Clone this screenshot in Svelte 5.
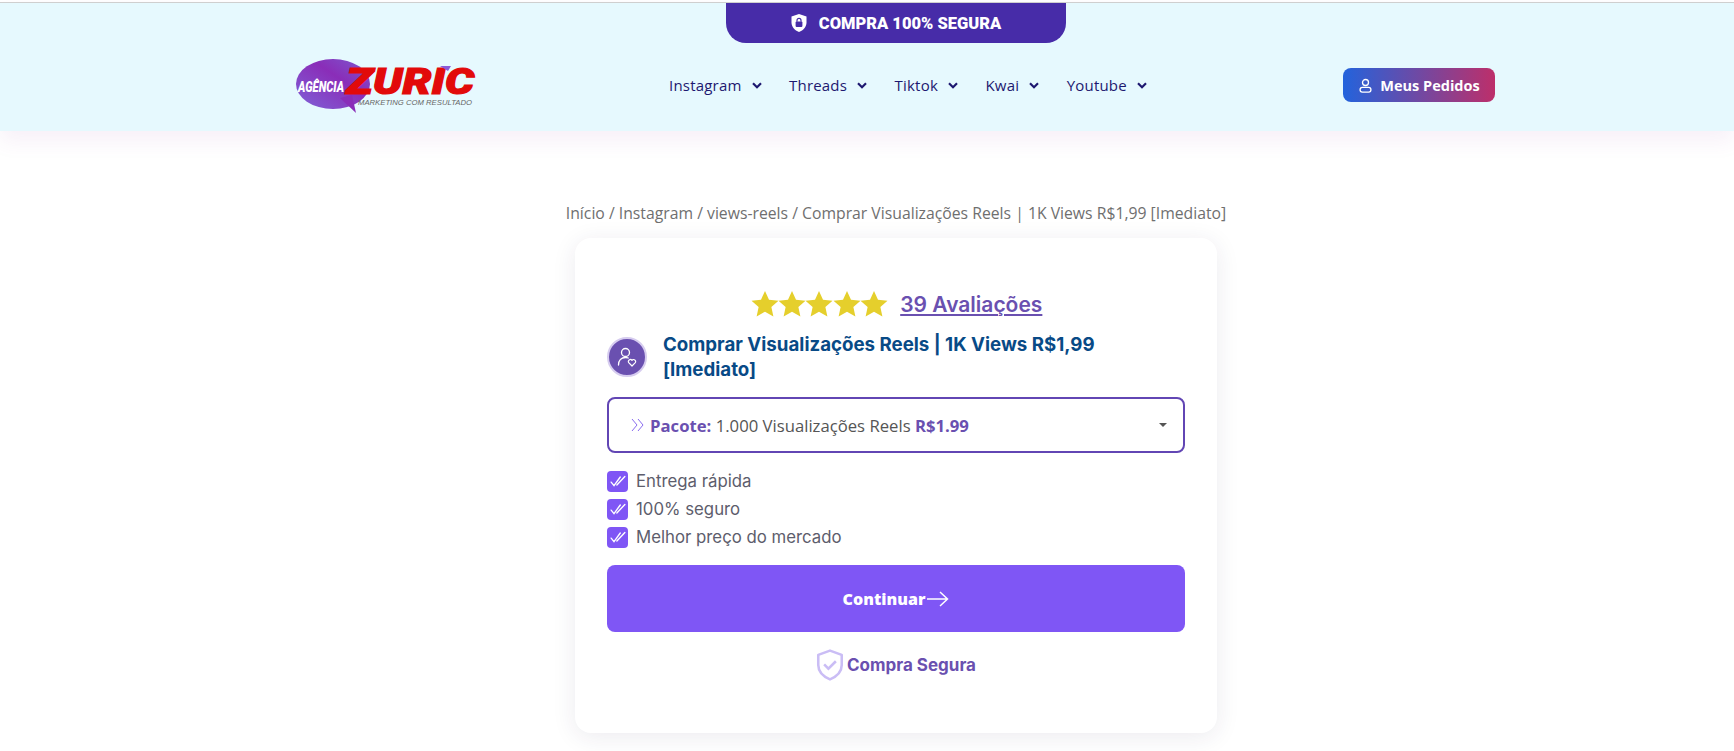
<script>
  const nav = ["Instagram", "Threads", "Tiktok", "Kwai", "Youtube"];
  const perks = ["Entrega rápida", "100% seguro", "Melhor preço do mercado"];
  const starPath = "M12 1.5l3.2 7 7.6.8-5.7 5.1 1.6 7.5L12 18.1l-6.7 3.8 1.6-7.5L1.2 9.3l7.6-.8z";
</script>

<div class="page">
  <header class="top">
    <div class="banner">
      <svg viewBox="0 0 16 18" width="16" height="18" aria-hidden="true">
        <path d="M8 0l7.5 2.6v6c0 4.4-3.2 7.8-7.5 9.4C3.700 16.400.5 13 .5 8.600v-6z" fill="#fff" />
        <rect x="4.600" y="7.500" width="6.800" height="5.600" rx="1" fill="#472ca8" />
        <path d="M6 7.800V6.400a2 2 0 0 1 4 0v1.400" fill="none" stroke="#472ca8" stroke-width="1.200" />
      </svg>
      <span>COMPRA 100% SEGURA</span>
    </div>

    <div class="bar">
      <svg class="logo" viewBox="0 0 182 56" width="182" height="56" role="img" aria-label="Agência Zuric">
        <defs>
          <linearGradient id="bubble" x1="0" x2="1" y1="1" y2="0">
            <stop offset="0" stop-color="#7f63d8" />
            <stop offset="0.6" stop-color="#8a2db8" />
            <stop offset="1" stop-color="#7b5ad0" />
          </linearGradient>
        </defs>
        <ellipse cx="37" cy="26" rx="37" ry="25" fill="url(#bubble)" />
        <path d="M44 40l16 15-4-18z" fill="#8a2db8" />
        <text class="l-agencia" x="2" y="34" textLength="46" lengthAdjust="spacingAndGlyphs">AGÊNCIA</text>
        <text class="l-zuric" x="50" y="36" textLength="128" lengthAdjust="spacingAndGlyphs">ZURIC</text>
        <path d="M144 8h11l-3 5z" fill="#8a5ad8" />
        <text class="l-sub" x="62" y="47" textLength="114" lengthAdjust="spacingAndGlyphs">MARKETING COM RESULTADO</text>
      </svg>

      <nav>
        {#each nav as item}
          <a href="#top" class="nav-item">
            <span>{item}</span>
            <svg viewBox="0 0 10 7" width="10" height="7" aria-hidden="true">
              <path d="M1 1.300L5 5.200l4-3.900" fill="none" stroke="#1d1870" stroke-width="2.200" />
            </svg>
          </a>
        {/each}
      </nav>

      <a href="#top" class="orders">
        <svg viewBox="0 0 16 16" width="15" height="15" aria-hidden="true">
          <circle cx="8" cy="4.800" r="3.200" fill="none" stroke="#fff" stroke-width="1.400" />
          <rect x="2.200" y="10" width="11.600" height="5" rx="2.400" fill="none" stroke="#fff" stroke-width="1.400" />
        </svg>
        <span>Meus Pedidos</span>
      </a>
    </div>
  </header>

  <main>
    <p class="crumbs">Início / Instagram / views-reels / Comprar Visualizações Reels | 1K Views R$1,99 [Imediato]</p>

    <section class="card">
      <div class="rating">
        <div class="stars">
          {#each [1, 2, 3, 4, 5] as n (n)}
            <svg viewBox="0 0 24 24" width="30" height="30" aria-hidden="true"><path d={starPath} fill="#e5cf2c" /></svg>
          {/each}
        </div>
        <a href="#top" class="reviews">39 Avaliações</a>
      </div>

      <div class="title-row">
        <span class="avatar">
          <svg viewBox="0 0 24 24" width="24" height="24" aria-hidden="true">
            <circle cx="10.500" cy="7.500" r="4" fill="none" stroke="#fff" stroke-width="1.300" />
            <path d="M3.500 20c0-4.500 2.800-7.500 7-7.500 1 0 2 .2 2.800.5" fill="none" stroke="#fff" stroke-width="1.300" stroke-linecap="round" />
            <path d="M17 21l-3.300-3.300a2 2 0 0 1 3.300-2.300 2 2 0 0 1 3.300 2.300z" fill="none" stroke="#fff" stroke-width="1.200" stroke-linejoin="round" />
          </svg>
        </span>
        <h1>Comprar Visualizações Reels | 1K Views R$1,99 [Imediato]</h1>
      </div>

      <div class="select">
        <svg viewBox="0 0 14 14" width="14" height="14" aria-hidden="true">
          <path d="M1 1l5 6-5 6M7 1l5 6-5 6" fill="none" stroke="#8a6cf0" stroke-width="1" />
        </svg>
        <span class="select-text"><b>Pacote:</b> 1.000 Visualizações Reels <b>R$1.99</b></span>
        <i class="caret"></i>
      </div>

      <ul class="perks">
        {#each perks as perk}
          <li>
            <span class="tick">
              <svg viewBox="0 0 14 10" width="16" height="12" aria-hidden="true">
                <path d="M1 6l2.500 3L9 1.500M6 8.500L13 1" fill="none" stroke="#fff" stroke-width="1.200" stroke-linecap="round" />
              </svg>
            </span>
            {perk}
          </li>
        {/each}
      </ul>

      <button class="go">
        <span>Continuar</span>
        <svg viewBox="0 0 22 16" width="22" height="16" aria-hidden="true">
          <path d="M0 8h20M13 1l7.500 7-7.500 7" fill="none" stroke="#fff" stroke-width="1.500" />
        </svg>
      </button>

      <div class="safe">
        <svg viewBox="0 0 26 30" width="28" height="32" aria-hidden="true">
          <path d="M13 1.500l11 4v9.500c0 6.500-4.800 10.800-11 13.500C6.800 25.800 2 21.500 2 15V5.500z" fill="none" stroke="#cabdf5" stroke-width="2.400" stroke-linejoin="round" />
          <path d="M7.500 14.500l4 4 7-7" fill="none" stroke="#cabdf5" stroke-width="2.400" />
        </svg>
        <span>Compra Segura</span>
      </div>
    </section>
  </main>
</div>

<style>
  :global(body) {
    margin: 0;
    background: #fff;
    overflow: hidden;
  }
  .page {
    height: 751px;
    box-sizing: border-box;
    padding-top: 2px;
    font-family: "Open Sans", "Liberation Sans", sans-serif;
  }
  .top {
    background: #e6f9fe;
    height: 128px;
    border-top: 1px solid #cfcfcf;
    box-shadow: 0 10px 20px rgba(150, 60, 160, 0.08);
    padding-left: 58px;
  }
  .banner {
    width: 340px;
    height: 40px;
    margin: 0 auto;
    box-sizing: border-box;
    background: #472ca8;
    border-radius: 0 0 20px 20px;
    color: #fff;
    display: flex;
    align-items: center;
    justify-content: center;
    gap: 12px;
    font-family: Roboto, sans-serif;
    font-size: 16.500px;
    font-weight: 900;
  }
  .bar {
    width: 1200px;
    margin: 8px auto 0;
    display: flex;
    align-items: center;
    height: 56px;
    padding-top: 6px;
  }
  .logo {
    flex: none;
    margin-top: 2px;
  }
  .l-agencia {
    font: italic 900 15px Roboto, sans-serif;
    fill: #fff;
  }
  .l-zuric {
    font: italic 900 37px Roboto, sans-serif;
    fill: #e20a0a;
    stroke: #e20a0a;
    stroke-width: 1.2px;
  }
  .l-sub {
    font: italic 400 7.500px "Liberation Sans", sans-serif;
    fill: #666;
  }
  nav {
    display: flex;
    gap: 27.500px;
    margin-left: 191px;
  }
  .nav-item {
    display: flex;
    align-items: center;
    gap: 10px;
    color: #1d1870;
    text-decoration: none;
    font-size: 15px;
    letter-spacing: 0.2px;
  }
  .orders {
    margin-left: auto;
    margin-right: 1px;
    width: 152px;
    height: 34px;
    box-sizing: border-box;
    border-radius: 8px;
    background: linear-gradient(90deg, #2363dc, #bd2f6a);
    color: #fff;
    display: flex;
    align-items: center;
    justify-content: center;
    gap: 7px;
    text-decoration: none;
    font-size: 14.500px;
    font-weight: 700;
  }
  main {
    padding-left: 58px;
    display: flex;
    flex-direction: column;
    align-items: center;
  }
  .crumbs {
    margin: 70px 0 0;
    height: 24px;
    line-height: 24px;
    color: #6f6f6f;
    font-size: 15.750px;
    white-space: nowrap;
  }
  .card {
    width: 642px;
    height: 495px;
    margin-top: 13px;
    box-sizing: border-box;
    padding: 50px 32px 0;
    background: #fff;
    border-radius: 16px;
    box-shadow: 0 4px 24px rgba(40, 30, 80, 0.09);
    font-family: "Inter", sans-serif;
  }
  .rating {
    display: flex;
    align-items: center;
    justify-content: center;
    gap: 14px;
    height: 32px;
  }
  .stars {
    display: flex;
  }
  .stars svg {
    margin-right: -2.700px;
  }
  .reviews {
    color: #6a50b0;
    font-size: 21px;
    font-weight: 600;
  }
  .title-row {
    display: flex;
    align-items: center;
    gap: 16px;
    margin-top: 12px;
  }
  .avatar {
    flex: none;
    width: 36px;
    height: 36px;
    border: 2px solid #d6ccef;
    border-radius: 50%;
    background: #6a50b0;
    display: flex;
    align-items: center;
    justify-content: center;
  }
  h1 {
    margin: 0;
    color: #084a86;
    font-size: 18.700px;
    font-weight: 700;
    line-height: 25px;
    width: 450px;
  }
  .select {
    margin-top: 15px;
    height: 56px;
    box-sizing: border-box;
    border: 2px solid #6246b4;
    border-radius: 8px;
    display: flex;
    align-items: center;
    padding: 0 16px 0 22px;
    gap: 5px;
    color: #555;
    font-family: "Open Sans", sans-serif;
    font-size: 16.700px;
  }
  .select-text b {
    color: #6a50b0;
  }
  .caret {
    margin-left: auto;
    border: 4px solid transparent;
    border-top-color: #555;
    border-bottom-width: 0;
  }
  .perks {
    list-style: none;
    margin: 14px 0 0;
    padding: 0;
    color: #5d5d6c;
    font-size: 16.800px;
  }
  .perks li {
    display: flex;
    align-items: center;
    gap: 8px;
    height: 28px;
  }
  .tick {
    width: 21px;
    height: 21px;
    border-radius: 4px;
    background: #7f56f5;
    display: flex;
    align-items: center;
    justify-content: center;
  }
  .go {
    display: flex;
    align-items: center;
    justify-content: center;
    gap: 2px;
    width: 100%;
    height: 67px;
    margin-top: 14px;
    border: 0;
    border-radius: 8px;
    background: #7f56f5;
    color: #fff;
    font-family: "Open Sans", sans-serif;
    font-size: 16px;
    font-weight: 800;
  }
  .safe {
    display: flex;
    align-items: center;
    justify-content: center;
    gap: 3px;
    margin-top: 17px;
    color: #6a50b0;
    font-size: 17px;
    font-weight: 700;
  }
</style>
